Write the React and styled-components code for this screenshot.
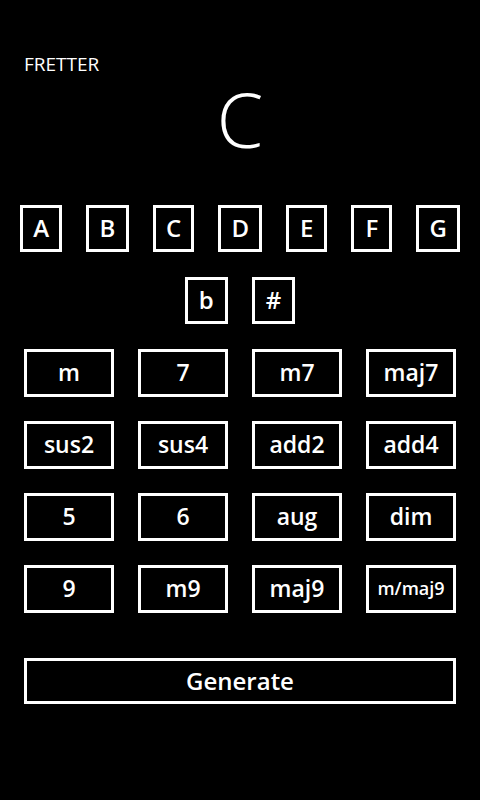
import React, { useState } from "react";
import styled, { createGlobalStyle } from "styled-components";

const GlobalStyle = createGlobalStyle`
  html, body {
    margin: 0;
    background: #000;
    color: #fff;
    font-family: "Open Sans", "Noto Sans", "DejaVu Sans", sans-serif;
  }
`;

const Page = styled.div`
  width: 480px;
  height: 800px;
  box-sizing: border-box;
  padding: 50px 20px 0;
  background: #000;
`;

const AppTitle = styled.div`
  font-size: 19px;
  line-height: 28px;
  padding-left: 4px;
`;

const ChordName = styled.div`
  margin-top: 4px;
  font-size: 75px;
  font-weight: 350;
  line-height: 75px;
  text-align: center;
`;

const NoteRow = styled.div`
  display: flex;
  justify-content: ${(p) => (p.$center ? "center" : "space-between")};
  gap: 24px;
  margin-top: ${(p) => p.$top}px;
`;

const Box = styled.button`
  box-sizing: border-box;
  background: transparent;
  color: #fff;
  border: 3px solid #fff;
  border-radius: 0;
  font-family: inherit;
  font-weight: 600;
  padding: 0;
  cursor: pointer;
  display: flex;
  align-items: center;
  justify-content: center;
`;

const NoteButton = styled(Box)`
  height: 47px;
  min-width: 41px;
  padding: 0 11px 2px;
  font-size: 24px;
`;

const ChordGrid = styled.div`
  display: grid;
  grid-template-columns: repeat(4, 90px);
  grid-auto-rows: 48px;
  column-gap: 24px;
  row-gap: 24px;
  margin: 25px 4px 0;
`;

const ChordButton = styled(Box)`
  font-size: ${(p) => (p.$small ? 18 : 23)}px;
  padding-bottom: 2px;
`;

const GenerateButton = styled(Box)`
  width: 432px;
  height: 46px;
  margin: 45px 4px 0;
  font-size: 24px;
  padding-bottom: 2px;
`;

const notes = ["A", "B", "C", "D", "E", "F", "G"];
const accidentals = ["b", "#"];
const chords = [
  "m", "7", "m7", "maj7",
  "sus2", "sus4", "add2", "add4",
  "5", "6", "aug", "dim",
  "9", "m9", "maj9", "m/maj9",
];

export default function App() {
  const [root, setRoot] = useState("C");
  return (
    <>
      <GlobalStyle />
      <Page>
        <AppTitle>FRETTER</AppTitle>
        <ChordName>{root}</ChordName>
        <NoteRow $top={48}>
          {notes.map((n) => (
            <NoteButton key={n} onClick={() => setRoot(n)}>
              {n}
            </NoteButton>
          ))}
        </NoteRow>
        <NoteRow $top={25} $center>
          {accidentals.map((a) => (
            <NoteButton key={a}>{a}</NoteButton>
          ))}
        </NoteRow>
        <ChordGrid>
          {chords.map((c) => (
            <ChordButton key={c} $small={c.length > 5}>
              {c}
            </ChordButton>
          ))}
        </ChordGrid>
        <GenerateButton>Generate</GenerateButton>
      </Page>
    </>
  );
}
